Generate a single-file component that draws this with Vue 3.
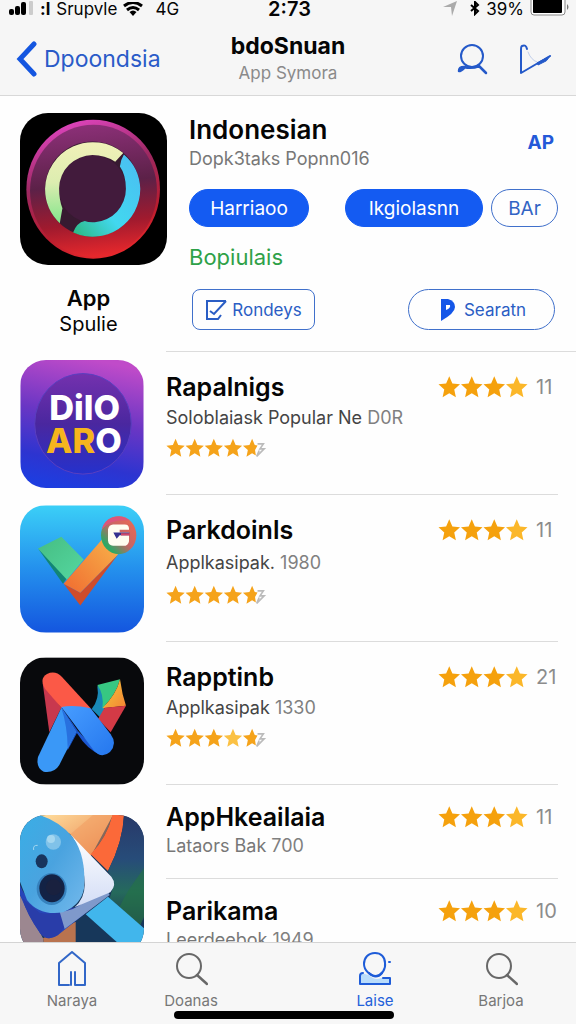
<template>
  <div class="screen">
    <header class="top">
      <div class="status-bar">
        <div class="status-left">
          <svg class="signal" viewBox="0 0 25 16" aria-hidden="true">
            <rect x="0" y="8" width="5" height="6" rx="2" />
            <rect x="6" y="5" width="5" height="9" rx="2" />
            <rect x="12" y="1" width="5" height="13" rx="2" />
            <rect x="20" y="0" width="4" height="14" rx="1" fill="#ccc" />
          </svg>
          <b>:l</b>
          <span>Srupvle</span>
          <svg class="wifi" viewBox="0 0 20 14" aria-hidden="true">
            <path d="M1 4Q10 -3 19 4M4 8Q10 3 16 8" fill="none" stroke="#000" stroke-width="3" />
            <path d="M6.500 10Q10 7 13.500 10L10 14Z" />
          </svg>
          <span class="network">4G</span>
        </div>
        <b class="time">2:73</b>
        <div class="status-right">
          <svg class="locate" viewBox="0 0 16 16" aria-hidden="true">
            <path d="M1 6L15 0L10 15L9 6Z" fill="#aaa" />
          </svg>
          <svg class="bluetooth" viewBox="0 0 10 15" aria-hidden="true">
            <path d="M1 4L8 10L5 13V1L8 4L1 10" fill="none" stroke="#000" stroke-width="2" />
          </svg>
          <span>39%</span>
          <svg class="battery" viewBox="0 0 40 17" aria-hidden="true">
            <path d="M1 0V12Q1 15 4 15H32Q35 15 35 12V0" fill="#fff" stroke="#888" />
            <path d="M3 0H32V12Q32 13 31 13H4Q3 13 3 12Z" fill="#000" />
            <path d="M37 4Q40 7 37 10Z" fill="#777" />
          </svg>
        </div>
      </div>

      <nav class="nav-bar">
        <a class="back" href="#">
          <svg viewBox="0 0 22 36" aria-hidden="true">
            <path d="M18 3L4 18L18 33" />
          </svg>
          <span>Dpoondsia</span>
        </a>
        <div class="heading">
          <h1>bdoSnuan</h1>
          <p>App Symora</p>
        </div>
        <div class="nav-actions">
          <button type="button" aria-label="Search">
            <svg viewBox="0 0 32 32">
              <circle cx="16" cy="13" r="11" />
              <path d="M3 28Q3 24 8 24Q16 26 23 23L30 30M3 28Q5 28 8 25" stroke-width="2.500" />
            </svg>
          </button>
          <button type="button" aria-label="Send">
            <svg viewBox="0 0 32 32">
              <path d="M7 6Q6 1 2 3Q1 3 1 7V30L30 13" />
              <path d="M30 13L17 20L18 22L26 18Z" fill="#2459c9" stroke-width="1" />
              <path d="M8 9Q11 17 17 19" stroke-width="1" opacity="0.25" />
            </svg>
          </button>
        </div>
      </nav>
    </header>

    <main class="content">
      <section class="featured">
        <div class="featured-app">
          <svg class="featured-icon" viewBox="31 40 440 455" aria-hidden="true">
            <defs>
              <linearGradient id="discRim" x1="0.3" y1="0" x2="0.6" y2="1">
                <stop offset="0" stop-color="#df45c0" />
                <stop offset="0.4" stop-color="#9c2860" />
                <stop offset="0.75" stop-color="#b81c2f" />
                <stop offset="1" stop-color="#e8282c" />
              </linearGradient>
              <linearGradient id="discFace" x1="0.4" y1="0" x2="0.5" y2="1">
                <stop offset="0" stop-color="#8c3078" />
                <stop offset="0.45" stop-color="#5c2148" />
                <stop offset="0.75" stop-color="#a01a2e" />
                <stop offset="1" stop-color="#e8282c" />
              </linearGradient>
              <linearGradient id="ringGreen" x1="0" y1="0" x2="0" y2="1">
                <stop offset="0" stop-color="#f1f0b8" />
                <stop offset="0.5" stop-color="#dcedb0" />
                <stop offset="1" stop-color="#83e58c" />
              </linearGradient>
              <linearGradient id="ringBlue" x1="1" y1="0" x2="0" y2="1">
                <stop offset="0" stop-color="#4bbcf3" />
                <stop offset="0.6" stop-color="#42d8ef" />
                <stop offset="1" stop-color="#2bb77d" />
              </linearGradient>
            </defs>
            <rect x="31" y="40" width="440" height="455" />
            <ellipse cx="250" cy="268" rx="200" ry="208" fill="url(#discRim)" />
            <ellipse cx="251" cy="273" rx="190" ry="198" fill="url(#discFace)" />
            <circle cx="248" cy="267" r="142" fill="#371a31" />
            <circle cx="248" cy="267" r="101" fill="#421b3c" />
            <path d="M340 160A143 143 0 0 0 106 267A143 143 0 0 0 150 370L158 325Q148 300 148 265A101 101 0 0 1 248 166Q285 166 316 186Z" fill="url(#ringGreen)" />
            <path d="M342 164A143 143 0 0 1 391 267A143 143 0 0 1 190 398Q200 368 225 363Q235 368 255 367A100 100 0 0 0 348 267Q348 225 330 200Q332 180 342 164Z" fill="url(#ringBlue)" />
          </svg>
          <strong>App</strong>
          <span>Spulie</span>
        </div>

        <div class="featured-info">
          <div class="featured-head">
            <div>
              <h2>Indonesian</h2>
              <p>Dopk3taks Popnn016</p>
            </div>
            <span class="ad-mark">AP</span>
          </div>
          <div class="pills">
            <button type="button" class="pill pill-first">Harriaoo</button>
            <button type="button" class="pill pill-wide">Ikgiolasnn</button>
            <button type="button" class="pill pill-outline">BAr</button>
          </div>
          <p class="tag">Bopiulais</p>
          <div class="actions">
            <button type="button" class="action">
              <svg viewBox="0 0 22 22" aria-hidden="true">
                <path d="M21 2H2V20H13L16 16M5 12L9 15L21 2" fill="none" stroke="currentColor" stroke-width="2" />
              </svg>
              Rondeys
            </button>
            <button type="button" class="action action-round">
              <svg viewBox="0 0 22 22" aria-hidden="true">
                <path d="M4 0H11Q18 2 18 8Q18 14 4 22Z" fill="#1456e8" />
                <path d="M9 6H13Q14 9 9 11Z" fill="#fff" />
              </svg>
              Searatn
            </button>
          </div>
        </div>
      </section>

      <div class="divider"></div>

      <section v-for="group in groups" :key="group.icon" class="group">
        <svg v-if="group.icon === 'dilo'" class="app-icon" viewBox="31 27 372 387" aria-hidden="true">
          <defs>
            <linearGradient id="diloBg" x1="0.6" y1="0" x2="0.4" y2="1">
              <stop offset="0" stop-color="#c04bc9" />
              <stop offset="0.45" stop-color="#6a36c4" />
              <stop offset="0.8" stop-color="#2d34d0" />
              <stop offset="1" stop-color="#1e3ddf" />
            </linearGradient>
            <linearGradient id="diloDisc" x1="0" y1="0" x2="0" y2="1">
              <stop offset="0" stop-color="#7431ae" />
              <stop offset="0.5" stop-color="#4a279f" />
              <stop offset="1" stop-color="#2531cc" />
            </linearGradient>
          </defs>
          <rect x="31" y="27" width="372" height="387" fill="url(#diloBg)" />
          <ellipse cx="220" cy="220" rx="146" ry="152" fill="url(#diloDisc)" stroke="#5a40c0" stroke-width="3" />
          <g font-family="Inter, sans-serif" font-size="104" font-weight="800">
            <text x="118" y="209" fill="#fff">DilO</text>
            <text x="108" y="309" fill="#f6b51d">AR<tspan fill="#fff">O</tspan></text>
          </g>
        </svg>

        <svg v-else-if="group.icon === 'check'" class="app-icon" viewBox="31 33 372 381" aria-hidden="true">
          <defs>
            <linearGradient id="checkBg" x1="0" y1="0" x2="0" y2="1">
              <stop offset="0" stop-color="#3bcff7" />
              <stop offset="0.5" stop-color="#2490ed" />
              <stop offset="1" stop-color="#1456df" />
            </linearGradient>
            <linearGradient id="checkGreen" x1="0" y1="0" x2="1" y2="1">
              <stop offset="0" stop-color="#45bd82" />
              <stop offset="1" stop-color="#55d7a0" />
            </linearGradient>
            <linearGradient id="checkOrange" x1="1" y1="0" x2="0" y2="1">
              <stop offset="0" stop-color="#f8b54b" />
              <stop offset="1" stop-color="#f06b30" />
            </linearGradient>
            <linearGradient id="badgeRim" x1="0" y1="1" x2="1" y2="0">
              <stop offset="0.2" stop-color="#2fa865" />
              <stop offset="0.5" stop-color="#c56565" />
              <stop offset="1" stop-color="#f36a50" />
            </linearGradient>
          </defs>
          <rect x="31" y="33" width="372" height="381" fill="url(#checkBg)" />
          <path d="M85 162L172 250L160 268Z" fill="#128574" />
          <path d="M85 162L155 127L222 195L172 256Z" fill="url(#checkGreen)" />
          <path d="M162 268L212 295L325 180L212 333Z" fill="#ce4c2b" />
          <path d="M162 268L290 120L325 180L212 295Z" fill="url(#checkOrange)" />
          <ellipse cx="327" cy="122" rx="53" ry="57" fill="url(#badgeRim)" />
          <path d="M276 105Q287 66 330 66Q350 68 358 78Q300 74 276 105Z" fill="#dc557a" />
          <path d="M310 90H345Q358 90 358 103V106H330V114H358V140Q356 154 341 154H310Q296 152 295 138V104Q298 91 310 90Z" fill="#fffdf0" />
          <path d="M311 114H359V122H330L321 133Z" fill="#35328f" />
          <path d="M334 116H361V123H334Z" fill="#cf4968" />
        </svg>

        <svg v-else-if="group.icon === 'ribbon'" class="app-icon icon-low" viewBox="31 40 372 380" aria-hidden="true">
          <defs>
            <linearGradient id="ribbonBlue" x1="0" y1="0" x2="1" y2="1">
              <stop offset="0" stop-color="#479dff" />
              <stop offset="1" stop-color="#2577ee" />
            </linearGradient>
            <linearGradient id="ribbonWarm" x1="0" y1="0" x2="1" y2="1">
              <stop offset="0" stop-color="#f2c93c" />
              <stop offset="1" stop-color="#f58433" />
            </linearGradient>
          </defs>
          <rect x="31" y="40" width="372" height="380" fill="#08090c" />
          <path d="M99 116L155 190L119 264Z" fill="#c8384e" />
          <path d="M263 126Q270 165 246 194L276 224Q290 175 300 122Z" fill="#1989b7" />
          <path d="M263 122L331 105Q320 150 278 192Q284 150 263 122Z" fill="#37c782" />
          <path d="M331 105L339 150L349 184L278 192Q320 150 331 105Z" fill="url(#ribbonWarm)" />
          <path d="M349 184L303 264L265 224L285 190Z" fill="#d33a46" />
          <path d="M155 188L205 260L174 318Z" fill="#1b55c9" />
          <path d="M205 260L275 332Q235 320 200 264Z" fill="#1c57d1" />
          <path d="M106 133Q88 103 112 89Q137 77 157 98L243 192L155 190Z" fill="#fb5947" />
          <path d="M155 188Q192 180 243 192L303 270Q324 298 301 323Q275 345 252 318Z" fill="url(#ribbonBlue)" />
          <path d="M155 190L199 262L149 362Q134 387 102 382Q78 370 85 338Z" fill="#3a98f7" />
          <path d="M155 190L199 262L174 310Q173 245 155 190Z" fill="#2871df" />
        </svg>

        <svg v-else class="app-icon icon-tall" viewBox="31 60 372 420" aria-hidden="true">
          <defs>
            <linearGradient id="shardSand" x1="0" y1="0" x2="1" y2="1">
              <stop offset="0" stop-color="#ffdf9e" />
              <stop offset="1" stop-color="#e77d49" />
            </linearGradient>
            <linearGradient id="shardNight" x1="0" y1="0" x2="0" y2="1">
              <stop offset="0" stop-color="#283969" />
              <stop offset="0.4" stop-color="#274c79" />
              <stop offset="0.7" stop-color="#256a5c" />
              <stop offset="1" stop-color="#1f3b52" />
            </linearGradient>
            <linearGradient id="shardBlue" x1="0" y1="0" x2="1" y2="1">
              <stop offset="0" stop-color="#39aee6" />
              <stop offset="0.5" stop-color="#4aa3df" />
              <stop offset="1" stop-color="#73b9ec" />
            </linearGradient>
            <linearGradient id="shardWhite" x1="0" y1="0" x2="0" y2="1">
              <stop offset="0" stop-color="#ffffff" />
              <stop offset="1" stop-color="#d3ddf6" />
            </linearGradient>
          </defs>
          <rect x="31" y="60" width="372" height="420" fill="#17375a" />
          <path d="M31 300L100 430L110 480H31Z" fill="#9c8790" />
          <path d="M100 430L198 380V480H110Z" fill="#b9734f" />
          <path d="M90 60H310L240 190L182 118Z" fill="url(#shardSand)" />
          <path d="M308 60H343Q340 140 295 228L243 178Q293 125 308 60Z" fill="#fb6939" />
          <path d="M182 118L243 178Q293 125 308 60H250Z" fill="#f19a5e" opacity="0.5" />
          <path d="M343 60H403V370L390 390L300 310L313 265L295 228Q340 140 343 60Z" fill="url(#shardNight)" />
          <path d="M403 220Q350 290 330 335L390 395L403 365Z" fill="#247344" opacity="0.6" />
          <path d="M228 358L295 305L403 400V480H365Z" fill="#41b6ec" />
          <path d="M31 270Q60 350 170 350L222 325L290 292L290 305L145 420Q115 442 91 415Q55 360 31 300Z" fill="#2745b8" />
          <path d="M90 353Q145 363 192 335L170 390L145 420Q110 442 91 413Q52 362 38 310Z" fill="#293da9" />
          <path d="M150 350Q190 350 222 322L292 285L300 300L165 402Z" fill="#7f99cb" />
          <path d="M182 118L305 245Q323 268 302 292L195 337Q225 310 225 270Q222 170 182 118Z" fill="url(#shardWhite)" />
          <path d="M31 60H90Q150 80 188 125Q230 180 223 280Q215 330 160 352Q90 364 52 315L31 260Z" fill="url(#shardBlue)" />
          <circle cx="131" cy="141" r="23" fill="#80c2e9" />
          <circle cx="124" cy="132" r="12" fill="#a5d7f0" />
          <path d="M72 165Q69 150 84 151" fill="none" stroke="#a5d7f0" stroke-width="3" />
          <ellipse cx="96" cy="199" rx="18" ry="21" fill="#18345d" />
          <ellipse cx="126" cy="282" rx="45" ry="48" fill="#3681bd" />
          <ellipse cx="127" cy="280" rx="38" ry="42" fill="#132245" />
          <circle cx="132" cy="277" r="24" fill="#19213f" />
        </svg>

        <div class="entries">
          <article v-for="app in group.apps" :key="app.name" :class="['entry', app.layout]">
            <div class="entry-head">
              <h3>{{ app.name }}</h3>
              <div class="rating">
                <svg viewBox="0 0 92 24" aria-hidden="true">
                  <path
                    v-for="n in 4"
                    :key="n"
                    :d="starPath"
                    :transform="`translate(${(n - 1) * 23} 0)`"
                    :fill="n === 4 ? '#fbb729' : '#f5a10d'"
                  />
                </svg>
                <span>{{ app.count }}</span>
              </div>
            </div>
            <p class="entry-sub">{{ app.detail }} <span>{{ app.year }}</span></p>
            <svg v-if="app.layout !== 'compact'" class="small-stars" viewBox="0 0 125 24" aria-hidden="true">
              <path d="M110 7H117L113 13H118L109 22L112 15" fill="none" stroke="#bbb" stroke-width="2" />
              <path
                v-for="n in 5"
                :key="n"
                :d="n === 5 ? cutStarPath : starPath"
                :transform="`translate(${(n - 1) * 23} 0)`"
                :fill="n === app.pale ? '#fbc144' : '#f5a31a'"
              />
            </svg>
          </article>
        </div>
      </section>
    </main>

    <nav class="tab-bar">
      <a v-for="tab in tabs" :key="tab.label" href="#" :class="['tab', { active: tab.active }]">
        <svg v-if="tab.icon === 'home'" class="home-icon" viewBox="0 0 34 36" aria-hidden="true">
          <path d="M14 34H4V12L17 1L30 12V34H20V21M16 34V21" />
        </svg>
        <svg v-else-if="tab.icon === 'person'" class="person-icon" viewBox="0 0 34 36" aria-hidden="true">
          <path d="M2 22V33H32V27H23Q17 30 11 24Z" fill="#b9dcfb" stroke="none" />
          <path d="M17 2C10 2 6 7 6 13C6 19 12 25 18 25C24 24 28 18 27 12C27 6 23 2 17 2Z" fill="#f7f7f7" />
          <path d="M5 22Q2 22 2 25V33H32V27H25M11 22Q18 29 24 22M31 11H32" />
        </svg>
        <svg v-else viewBox="0 0 34 36" aria-hidden="true">
          <circle cx="15" cy="15" r="12" />
          <path d="M23 24L33 33" stroke-width="2.500" />
        </svg>
        <span>{{ tab.label }}</span>
      </a>
      <div class="home-indicator"></div>
    </nav>
  </div>
</template>

<script setup>
const starPath = 'M11.500 1L14.700 8.400L22.500 9.200L16.600 14.500L18.300 22.500L11.500 18.300L4.700 22.500L6.400 14.500L0.500 9.200L8.300 8.400Z'
const cutStarPath = 'M11.500 1L14.700 8.400L18 9L15 14.500L16 21L11.500 18.300L4.700 22.500L6.400 14.500L0.500 9.200L8.300 8.400Z'

const groups = [
  {
    icon: 'dilo',
    apps: [{ name: 'Rapalnigs', detail: 'Soloblaiask Popular Ne', year: 'D0R', count: '11', layout: 'plain' }]
  },
  {
    icon: 'check',
    apps: [{ name: 'Parkdoinls', detail: 'Applkasipak.', year: '1980', count: '11', layout: 'roomy' }]
  },
  {
    icon: 'ribbon',
    apps: [{ name: 'Rapptinb', detail: 'Applkasipak', year: '1330', count: '21', layout: 'plain', pale: 4 }]
  },
  {
    icon: 'shards',
    apps: [
      { name: 'AppHkeailaia', detail: 'Lataors Bak', year: '700', count: '11', layout: 'compact' },
      { name: 'Parikama', detail: 'Leerdeebok', year: '1949', count: '10', layout: 'compact' }
    ]
  }
]

const tabs = [
  { label: 'Naraya', icon: 'home' },
  { label: 'Doanas', icon: 'search' },
  { label: 'Laise', icon: 'person', active: true },
  { label: 'Barjoa', icon: 'search' }
]
</script>

<style>
body {
  background: #fefefe;
}
</style>

<style scoped>
.screen {
  display: flex;
  flex-direction: column;
  height: 100vh;
  overflow: hidden;
  background: #fefefe;
  color: #050505;
  font-family: Inter, "Liberation Sans", sans-serif;
}

h1,
h2,
h3,
p {
  margin: 0;
}

button {
  font-family: inherit;
  cursor: pointer;
}

a {
  text-decoration: none;
}

/* Header */
.top {
  flex: none;
  background: #f6f6f6;
  border-bottom: 1px solid #d8d8d8;
}

.status-bar {
  display: grid;
  grid-template-columns: 1fr auto 1fr;
  align-items: center;
  height: 16px;
  padding: 0 6px 0 9px;
  font-size: 17px;
  line-height: 16px;
}

.status-left,
.status-right {
  display: flex;
  align-items: center;
  gap: 6px;
}

.status-right {
  justify-content: flex-end;
}

.signal {
  width: 25px;
  height: 16px;
}

.wifi {
  width: 20px;
  height: 14px;
}

.network {
  margin-left: 6px;
}

.time {
  font-size: 20px;
  font-weight: 600;
}

.locate {
  width: 16px;
  height: 16px;
  margin-right: 6px;
}

.bluetooth {
  width: 10px;
  height: 15px;
}

.battery {
  width: 40px;
  height: 17px;
}

.nav-bar {
  display: grid;
  grid-template-columns: 1fr auto 1fr;
  align-items: center;
  box-sizing: border-box;
  height: 79px;
  padding: 6px 16px 0;
}

.back {
  display: flex;
  align-items: center;
  gap: 6px;
  color: #2a5bc8;
  font-size: 23px;
}

.back svg {
  width: 22px;
  height: 36px;
  fill: none;
  stroke: #1456e0;
  stroke-width: 5;
  stroke-linecap: round;
}

.heading {
  text-align: center;
}

.heading h1 {
  font-size: 23px;
  font-weight: 700;
  line-height: 28px;
}

.heading p {
  color: #8a8a8a;
  font-size: 17px;
  line-height: 26px;
}

.nav-actions {
  display: flex;
  justify-content: flex-end;
  gap: 32px;
  padding-right: 8px;
}

.nav-actions button {
  padding: 0;
  border: 0;
  background: none;
}

.nav-actions svg {
  display: block;
  width: 32px;
  height: 32px;
  fill: none;
  stroke: #2459c9;
  stroke-width: 2;
  stroke-linecap: round;
  stroke-linejoin: round;
}

.content {
  flex: 1;
  min-height: 0;
  overflow: hidden;
}

/* Featured app */
.featured {
  display: grid;
  grid-template-columns: 147px 1fr;
  gap: 22px;
  padding: 17px 18px 14px 20px;
}

.featured-app {
  display: flex;
  flex-direction: column;
  font-size: 20px;
  line-height: 26px;
  text-align: center;
}

.featured-icon {
  width: 147px;
  height: 152px;
  margin-bottom: 20px;
  border-radius: 28px;
}

.featured-app strong,
.featured-app span {
  padding-right: 10px;
}

.featured-app strong {
  font-size: 22px;
  font-weight: 600;
}

.featured-head {
  display: flex;
  align-items: center;
  justify-content: space-between;
}

.featured-head h2 {
  font-size: 26px;
  font-weight: 600;
  line-height: 34px;
}

.featured-head p {
  color: #777;
  font-size: 18px;
  line-height: 24px;
}

.ad-mark {
  padding-right: 4px;
  color: #2459d8;
  font-size: 19px;
  font-weight: 700;
}

.pills {
  display: flex;
  gap: 8px;
  margin-top: 18px;
}

.pill {
  box-sizing: border-box;
  height: 38px;
  padding: 0;
  border: 1px solid #145bf2;
  border-radius: 19px;
  background: #145bf2;
  color: #fff;
  font-size: 19px;
}

.pill-first {
  width: 120px;
  margin-right: auto;
}

.pill-wide {
  width: 138px;
}

.pill-outline {
  width: 67px;
  border-color: #4070cb;
  background: #fefefe;
  color: #3264c4;
}

.tag {
  margin-top: 16px;
  color: #2ea148;
  font-size: 22px;
  line-height: 28px;
}

.actions {
  display: flex;
  justify-content: space-between;
  margin-top: 18px;
  padding: 0 3px;
}

.action {
  display: flex;
  align-items: center;
  justify-content: center;
  gap: 5px;
  box-sizing: border-box;
  width: 123px;
  height: 41px;
  padding: 0;
  border: 1px solid #4070cb;
  border-radius: 8px;
  background: #fefefe;
  color: #2a5dc4;
  font-size: 17px;
}

.action svg {
  width: 22px;
  height: 22px;
}

.action-round {
  width: 147px;
  border-radius: 21px;
}

.divider {
  height: 1px;
  margin-left: 166px;
  background: #dcdcdc;
}

/* App list */
.group {
  display: grid;
  grid-template-columns: 124px 1fr;
  align-items: center;
  gap: 22px;
  padding: 0 18px 0 20px;
}

.app-icon {
  width: 124px;
  height: 128px;
  border-radius: 26px;
}

.icon-low {
  align-self: end;
}

.icon-tall {
  align-self: start;
  height: 140px;
  margin-top: 30px;
}

.entry {
  padding: 20px 0 36px;
  border-bottom: 1px solid #dcdcdc;
}

.entry-head {
  display: flex;
  align-items: center;
  justify-content: space-between;
}

.entry h3 {
  font-size: 25px;
  font-weight: 600;
  line-height: 30px;
}

.rating {
  display: flex;
  align-items: center;
  gap: 8px;
  color: #8c8c8c;
  font-size: 20px;
  line-height: 30px;
}

.rating svg {
  width: 90px;
  height: 24px;
}

.rating span {
  min-width: 22px;
}

.entry-sub {
  margin-top: 4px;
  color: #444;
  font-size: 18px;
  line-height: 24px;
}

.entry-sub span {
  color: #808080;
}

.small-stars {
  display: block;
  width: 104px;
  height: 20px;
  margin-top: 8px;
}

.roomy {
  padding-bottom: 36px;
}

.roomy .entry-sub {
  margin-top: 6px;
}

.roomy .small-stars {
  margin-top: 10px;
}

.compact {
  padding: 17px 0 20px;
}

.compact .entry-sub {
  margin-top: 2px;
  color: #777;
}

/* Bottom tabs */
.tab-bar {
  position: relative;
  display: grid;
  flex: none;
  grid-template-columns: 120fr 118fr 62fr 126fr 126fr;
  height: 81px;
  padding: 0 12px;
  border-top: 1px solid #d4d4d4;
  background: #f7f7f7;
}

.tab {
  display: flex;
  flex-direction: column;
  align-items: center;
  padding-top: 8px;
  color: #777;
  font-size: 15px;
  line-height: 20px;
}

.tab:nth-child(3) {
  grid-column: 4;
}

.tab svg {
  width: 34px;
  height: 36px;
  margin-bottom: 4px;
  fill: none;
  stroke: #686868;
  stroke-width: 2;
  stroke-linecap: round;
  stroke-linejoin: round;
}

.tab .home-icon {
  stroke: #3267c8;
}

.tab .person-icon {
  stroke: #1e5cd8;
}

.active {
  color: #2461da;
}

.home-indicator {
  position: absolute;
  bottom: 5px;
  left: 50%;
  width: 220px;
  height: 8px;
  margin-left: -114px;
  border-radius: 4px;
  background: #000;
}
</style>
